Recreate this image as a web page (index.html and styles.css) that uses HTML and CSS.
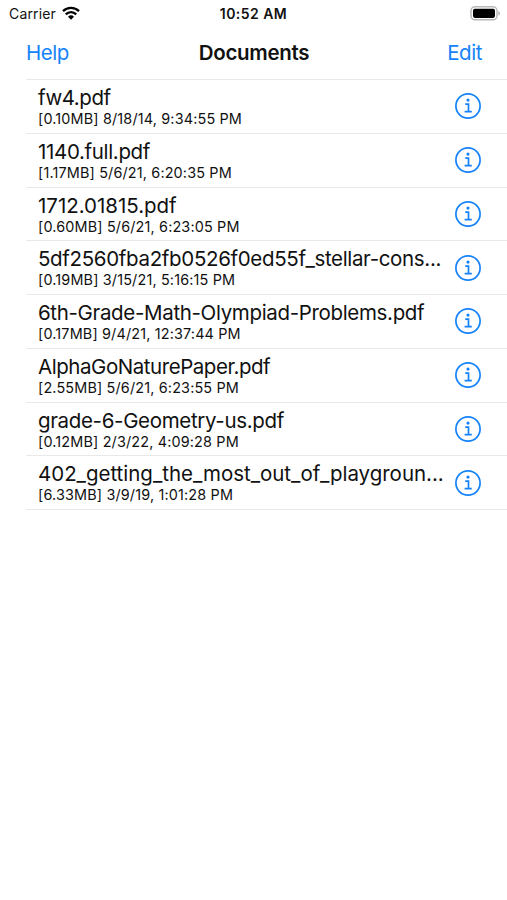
FILE: index.html
```html
<!DOCTYPE html>
<html lang="en">
<head>
    <meta charset="UTF-8">
    <title>Documents</title>
    <link rel="stylesheet" href="styles.css">
</head>
<body>
<svg class="defs" width="0" height="0">
    <symbol id="info" viewBox="0 0 26 26">
        <circle cx="13" cy="13" r="12.1" fill="none" stroke="currentColor" stroke-width="1.7"/>
        <circle cx="13" cy="7.1" r="1.6" fill="currentColor"/>
        <path d="M10.2 11.2h3.3v7.4M9.6 18.7h7.2" fill="none" stroke="currentColor" stroke-width="1.7"/>
    </symbol>
</svg>
<div class="status">
    <div class="carrier">
        <span>Carrier</span>
        <svg class="wifi" width="18" height="14" viewBox="0 0 18 14">
            <path d="M1 5.1a11.3 11.3 0 0 1 16 0M3.8 8.4a7.3 7.3 0 0 1 10.4 0" fill="none" stroke="#000" stroke-width="2.3"/>
            <path d="M9 13.8l-3-3a4.3 4.3 0 0 1 6 0z"/>
        </svg>
    </div>
    <time>10:52 AM</time>
    <svg class="battery" width="31" height="15" viewBox="0 0 31 15">
        <rect x="1" y=".8" width="26" height="13" rx="4" fill="#fff" stroke="#b8b8b8" stroke-width="1.5"/>
        <rect x="3" y="2.7" width="22" height="9.2" rx="1.8"/>
        <path d="M28.3 5c2.4.8 2.4 3.8 0 4.6z" fill="#b8b8b8"/>
    </svg>
</div>
<header>
    <a class="help">Help</a>
    <h1>Documents</h1>
    <a class="edit">Edit</a>
</header>
<ul class="files">
    <li>
        <div class="file"><p class="tight">fw4.pdf</p><time>[0.10MB] 8/18/14, 9:34:55 PM</time></div>
        <svg class="info"><use href="#info"/></svg>
    </li>
    <li>
        <div class="file"><p>1140.full.pdf</p><time>[1.17MB] 5/6/21, 6:20:35 PM</time></div>
        <svg class="info"><use href="#info"/></svg>
    </li>
    <li>
        <div class="file"><p class="loose">1712.01815.pdf</p><time>[0.60MB] 5/6/21, 6:23:05 PM</time></div>
        <svg class="info"><use href="#info"/></svg>
    </li>
    <li>
        <div class="file"><p>5df2560fba2fb0526f0ed55f_stellar-cons...</p><time>[0.19MB] 3/15/21, 5:16:15 PM</time></div>
        <svg class="info"><use href="#info"/></svg>
    </li>
    <li>
        <div class="file"><p>6th-Grade-Math-Olympiad-Problems.pdf</p><time>[0.17MB] 9/4/21, 12:37:44 PM</time></div>
        <svg class="info"><use href="#info"/></svg>
    </li>
    <li>
        <div class="file"><p class="tight">AlphaGoNaturePaper.pdf</p><time>[2.55MB] 5/6/21, 6:23:55 PM</time></div>
        <svg class="info"><use href="#info"/></svg>
    </li>
    <li>
        <div class="file"><p>grade-6-Geometry-us.pdf</p><time>[0.12MB] 2/3/22, 4:09:28 PM</time></div>
        <svg class="info"><use href="#info"/></svg>
    </li>
    <li>
        <div class="file"><p class="loose">402_getting_the_most_out_of_playgroun...</p><time>[6.33MB] 3/9/19, 1:01:28 PM</time></div>
        <svg class="info"><use href="#info"/></svg>
    </li>
</ul>
</body>
</html>
```
FILE: styles.css
```css
* {
    margin: 0;
    padding: 0;
    list-style: none;
    box-sizing: border-box;
}

body {
    background: #FFFFFF;
    color: #111;
    font-family: Inter, Roboto, sans-serif;
}

.defs {
    display: block;
}

.status {
    height: 27px;
    padding: 0 6px 0 9px;
    display: grid;
    grid-template-columns: 1fr auto 1fr;
    align-items: center;
    font-size: 14px;
    line-height: 27px;
}

.carrier {
    display: flex;
    align-items: center;
    gap: 6px;
    letter-spacing: .15px;
}

.status > time {
    font-weight: 600;
    letter-spacing: .45px;
    margin-right: 3px;
}

.battery {
    justify-self: end;
    margin-bottom: 1px;
}

.wifi {
    margin-bottom: 1px;
}

header {
    height: 52px;
    padding: 0 25px 0 26px;
    display: grid;
    grid-template-columns: 1fr auto 1fr;
    align-items: center;
    font-size: 20.5px;
    letter-spacing: -.45px;
    line-height: 50px;
}

header > a {
    color: #1482fa;
}

header > .edit {
    text-align: right;
}

header > h1 {
    font-size: 20.5px;
    font-weight: 600;
    letter-spacing: -.3px;
}

.files {
    margin-left: 26px;
    border-top: 1px solid #e9e9e9;
}

.files > li {
    height: 53.75px;
    padding: 0 26px 0 12px;
    border-bottom: 1px solid #e9e9e9;
    display: flex;
    align-items: center;
    justify-content: space-between;
}

.file > p {
    padding-top: .4px;
    font-size: 20.5px;
    line-height: 24px;
    letter-spacing: -.34px;
    white-space: nowrap;
}

.file > .tight {
    letter-spacing: -.45px;
}

.file > .loose {
    letter-spacing: -.02px;
}

.file > time {
    display: block;
    font-size: 14.4px;
    line-height: 17px;
    letter-spacing: .16px;
}

.info {
    width: 26px;
    height: 26px;
    flex: none;
    color: #1482fa;
}
```
